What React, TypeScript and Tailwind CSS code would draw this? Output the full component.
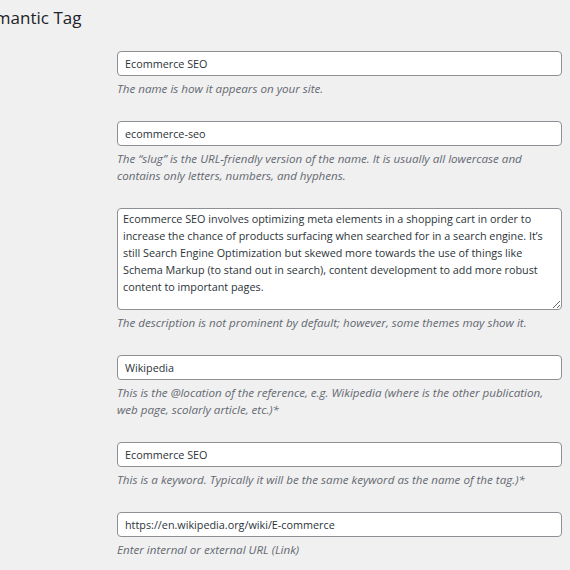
const fields = [
  {
    value: "Ecommerce SEO",
    help: "The name is how it appears on your site.",
  },
  {
    value: "ecommerce-seo",
    help: "The \u201cslug\u201d is the URL-friendly version of the name. It is usually all lowercase and contains only letters, numbers, and hyphens.",
  },
  {
    value:
      "Ecommerce SEO involves optimizing meta elements in a shopping cart in order to increase the chance of products surfacing when searched for in a search engine. It\u2019s still Search Engine Optimization but skewed more towards the use of things like Schema Markup (to stand out in search), content development to add more robust content to important pages.",
    help: "The description is not prominent by default; however, some themes may show it.",
    multiline: true,
  },
  {
    value: "Wikipedia",
    help: "This is the @location of the reference, e.g. Wikipedia (where is the other publication, web page, scolarly article, etc.)*",
  },
  {
    value: "Ecommerce SEO",
    help: "This is a keyword. Typically it will be the same keyword as the name of the tag.)*",
  },
  {
    value: "https://en.wikipedia.org/wiki/E-commerce",
    help: "Enter internal or external URL (Link)",
  },
];

export default function App() {
  return (
    <div
      className="min-h-screen bg-[#f0f0f1] text-[#2c3338] overflow-hidden"
      style={{ fontFamily: '"Open Sans", "Noto Sans", sans-serif' }}
    >
      <h1 className="ml-[-24px] pt-[5px] h-[51px] text-[17px] leading-[26px] font-normal text-[#1d2327]">
        Semantic Tag
      </h1>

      <div className="flex">
        <div className="w-[117px] shrink-0" />
        <div className="w-[445px] flex flex-col gap-[24px]">
          {fields.map((f, i) => (
            <div key={i}>
              {f.multiline ? (
                <textarea
                  defaultValue={f.value}
                  className="block w-full h-[102px] bg-white border border-[#8c8f94] rounded-[4px] px-[5px] pt-[1px] text-[10.8px] leading-[17px] text-[#2c3338] resize-y outline-none"
                />
              ) : (
                <input
                  defaultValue={f.value}
                  className="block w-full h-[25px] bg-white border border-[#8c8f94] rounded-[4px] px-[7px] text-[10.8px] text-[#2c3338] outline-none"
                />
              )}
              <p className="mt-[4px] text-[11.6px] leading-[17px] italic text-[#646970]">
                {f.help}
              </p>
            </div>
          ))}
        </div>
      </div>
    </div>
  );
}
